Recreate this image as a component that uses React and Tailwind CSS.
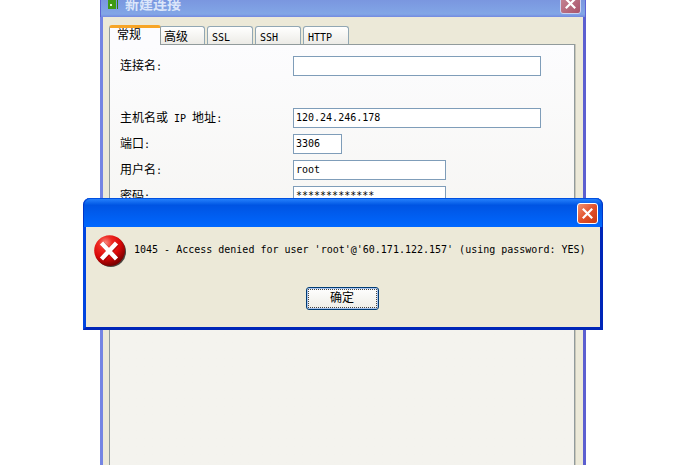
import React from 'react'

const tabs = ['高级', 'SSL', 'SSH', 'HTTP']

const fields = [
  { id: 'name', label: '连接名', value: '', size: 'w-[248px]', gap: 'mb-8' },
  { id: 'host', label: '主机名或 IP 地址', value: '120.24.246.178', size: 'w-[248px]', gap: 'mb-1.5' },
  { id: 'port', label: '端口', value: '3306', size: 'w-[49px]', gap: 'mb-1.5' },
  { id: 'user', label: '用户名', value: 'root', size: 'w-[153px]', gap: 'mb-1.5' },
  { id: 'password', label: '密码', value: '*************', size: 'w-[153px]', gap: 'mb-1.5' },
]

// Latin runs are set in the monospace face, Chinese runs keep the larger size
function Mixed({ text }) {
  return text.split(/([ -~]+)/).map((part, i) =>
    /^[ -~]+$/.test(part) ? (
      <span key={i} className="whitespace-pre font-['DejaVu_Sans_Mono',monospace] text-[10px]">
        {part}
      </span>
    ) : (
      part
    ),
  )
}

function CloseButton({ className }) {
  return (
    <button
      type="button"
      aria-label="关闭"
      className={`flex h-[21px] w-[21px] shrink-0 items-center justify-center rounded-[3px] border ${className}`}
    >
      <svg viewBox="0 0 11 11" className="h-[11px] w-[11px]" aria-hidden="true">
        <path d="M0.8 0.8 L10.2 10.2 M10.2 0.8 L0.8 10.2" stroke="#fff" strokeWidth="2.2" />
      </svg>
    </button>
  )
}

function ErrorIcon() {
  return (
    <svg viewBox="0 0 32 32" className="h-8 w-8 shrink-0" aria-hidden="true">
      <defs>
        <radialGradient id="ball" cx="0.36" cy="0.25" r="0.75">
          <stop offset="0" stopColor="#f98a80" />
          <stop offset="0.3" stopColor="#ee2a22" />
          <stop offset="0.65" stopColor="#d90808" />
          <stop offset="1" stopColor="#7c0000" />
        </radialGradient>
      </defs>
      <circle cx="16.8" cy="16.8" r="15.2" fill="#4b4640" />
      <circle cx="15.6" cy="15.6" r="15.4" fill="url(#ball)" />
      <path d="M8.5 9 L23 24.5 M23 9 L8.5 24.5" stroke="#8c0000" strokeWidth="5" opacity="0.5" />
      <path d="M7.5 8 L22.5 24 M22.5 8 L7.5 24" stroke="#fff" strokeWidth="4.4" />
    </svg>
  )
}

function ConnectionWindow() {
  return (
    <section className="-mt-3 mr-[112px] ml-[100px] flex flex-1 flex-col border-r-3 border-l-3 border-r-[#5c5fd0] border-l-[#7585e3] bg-[#ece9d8]">
      {/* Title bar */}
      <header className="-mx-[3px] flex h-[29px] shrink-0 items-center border-x border-[#5c62d4] bg-linear-to-b from-[#7a96df] from-40% via-[#82a6e6] via-90% to-[#7389df] pt-px pr-1 pl-1">
        <svg viewBox="0 0 16 16" className="h-4 w-4" aria-hidden="true">
          <rect x="3" y="0" width="8" height="14" fill="#3f9a12" />
          <rect x="12" y="0" width="1" height="14" fill="#2f7d0c" />
          <rect x="5" y="9" width="2" height="2" fill="#e4f5d8" />
        </svg>
        <h1 className="ml-1 flex-1 pt-1 text-sm leading-4 font-bold text-[#dbe6fa]">新建连接</h1>
        <CloseButton className="border-[#c9d3f3] bg-linear-to-br from-[#c88a98] to-[#a8526a]" />
      </header>

      <div className="flex flex-1 flex-col pt-[7px] pr-2 pl-1.5">
        {/* Tabs */}
        <div role="tablist" className="flex h-5 items-end gap-0.5">
          <button
            type="button"
            role="tab"
            aria-selected="true"
            className="relative -mr-1 -mb-px h-5 w-[52px] shrink-0 rounded-t-[3px] border-x border-t-3 border-x-[#919b9c] border-t-[#f7a526] bg-[#fcfcfe] pb-0.5 pl-[7px] text-left leading-4"
          >
            常规
          </button>
          {tabs.map((tab) => (
            <button
              key={tab}
              type="button"
              role="tab"
              aria-selected="false"
              className="h-[18px] w-[46px] rounded-t-[3px] border border-b-0 border-[#91a7b4] bg-linear-to-b from-white to-[#ecebe6] pt-[3px] pl-1 text-left leading-4"
            >
              <Mixed text={tab} />
            </button>
          ))}
        </div>

        {/* Form */}
        <form className="flex-1 border border-b-0 border-[#919b9c] bg-linear-to-b from-[#fcfcfe] to-[#f4f3ee] to-60% pt-[11px] pl-2.5 shadow-[1px_0_0_#c8c6b8]">
          {fields.map((field) => (
            <div key={field.id} className={`flex h-5 items-center ${field.gap}`}>
              <label htmlFor={field.id} className="w-[173px] shrink-0 pt-0.5">
                <Mixed text={`${field.label}:`} />
              </label>
              <input
                id={field.id}
                type="text"
                defaultValue={field.value}
                className={`h-5 border border-[#7f9db9] bg-white px-0.5 pb-0.5 font-['DejaVu_Sans_Mono',monospace] text-[10px] leading-4 outline-none ${field.size}`}
              />
            </div>
          ))}
        </form>
      </div>
    </section>
  )
}

function ErrorDialog() {
  return (
    <div
      role="alertdialog"
      aria-describedby="message"
      className="absolute top-[198px] right-[95px] left-[83px] rounded-t-[7px] border-3 border-t-0 border-r-[#0026b8] border-b-[#0026b8] border-l-[#0045e0] bg-[#ece9d8]"
    >
      <header className="-mx-[3px] flex h-[29px] items-center justify-end rounded-t-[7px] border-x border-[#0036c8] bg-linear-to-b from-[#2a86ff] via-[#0054e3] via-25% to-[#0068ff] pt-0.5 pr-1 shadow-[inset_0_1px_0_#0050e0]">
        <CloseButton className="border-white bg-linear-to-br from-[#f0906e] via-[#e2512a] to-[#c83a12]" />
      </header>
      <div className="flex flex-col items-center pt-2 pb-[17px]">
        <div className="flex w-full gap-2 pl-2">
          <ErrorIcon />
          <p id="message" className="pt-[7px] leading-4 whitespace-nowrap">
            <Mixed text="1045 - Access denied for user 'root'@'60.171.122.157' (using password: YES)" />
          </p>
        </div>
        <button
          type="button"
          className="mt-5 mr-0.5 h-[23px] w-[73px] rounded-[3px] border border-[#003c74] bg-linear-to-b from-white to-[#eeede6] p-px shadow-[inset_0_0_0_1px_#a9c4ee]"
        >
          <span className="flex h-full items-center justify-center border border-dotted border-[#444]">确定</span>
        </button>
      </div>
    </div>
  )
}

export default function App() {
  return (
    <main className="relative flex h-screen flex-col overflow-hidden bg-white font-['Liberation_Mono','Noto_Sans_CJK_SC',monospace] text-xs text-black">
      <ConnectionWindow />
      <ErrorDialog />
    </main>
  )
}
